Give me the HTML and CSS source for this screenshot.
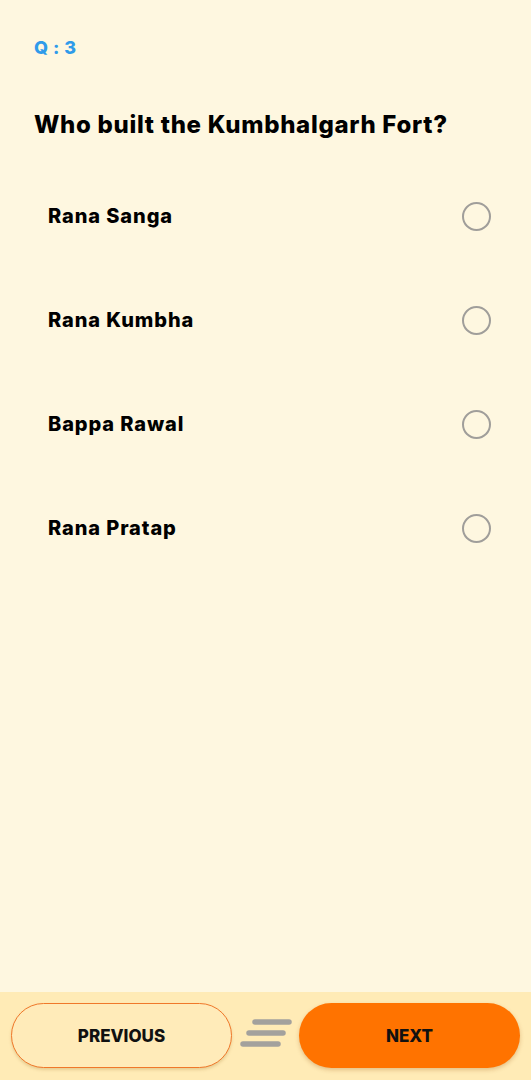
FILE: index.html
```html
<!DOCTYPE html>
<html lang="en">
<head>
    <meta charset="UTF-8">
    <meta name="viewport" content="width=device-width, initial-scale=1.0">
    <title>Quiz</title>
    <link rel="stylesheet" href="styles.css">
</head>
<body>
    <div class="screen">
        <div class="content">
            <div class="q-number">Q : 3</div>
            <h1 class="question">Who built the Kumbhalgarh Fort?</h1>

            <div class="options">
                <label class="option">
                    <span class="option-text">Rana Sanga</span>
                    <span class="radio"></span>
                </label>
                <label class="option">
                    <span class="option-text">Rana Kumbha</span>
                    <span class="radio"></span>
                </label>
                <label class="option">
                    <span class="option-text">Bappa Rawal</span>
                    <span class="radio"></span>
                </label>
                <label class="option">
                    <span class="option-text">Rana Pratap</span>
                    <span class="radio"></span>
                </label>
            </div>
        </div>

        <div class="bottom-bar">
            <button class="nav-btn prev-btn">PREVIOUS</button>
            <div class="menu-icon">
                <svg width="54" height="34" viewBox="0 0 54 34">
                    <line x1="16" y1="6" x2="50" y2="6" />
                    <line x1="10" y1="17" x2="44" y2="17" />
                    <line x1="4" y1="28" x2="39" y2="28" />
                </svg>
            </div>
            <button class="nav-btn next-btn">NEXT</button>
        </div>
    </div>
</body>
</html>
```

FILE: styles.css
```css
* {
    margin: 0;
    padding: 0;
    box-sizing: border-box;
}

body {
    font-family: 'Inter', 'Lato', sans-serif;
    background: #fef7e0;
    color: #000;
}

.screen {
    height: 1080px;
    display: flex;
    flex-direction: column;
}

.content {
    flex: 1;
    padding: 36px 34px 0 34px;
}

.q-number {
    color: #2f9bea;
    font-size: 18px;
    font-weight: 800;
    line-height: 24px;
    letter-spacing: 0.5px;
}

.question {
    margin-top: 49px;
    font-size: 24px;
    font-weight: 800;
    line-height: 32px;
    letter-spacing: 0.7px;
}

.options {
    margin-top: 23px;
    display: flex;
    flex-direction: column;
}

.option {
    height: 104px;
    display: flex;
    align-items: center;
    justify-content: space-between;
    padding: 0 6px 0 14px;
    cursor: pointer;
}

.option-text {
    font-size: 20px;
    font-weight: 800;
    letter-spacing: 0.9px;
}

.radio {
    width: 29px;
    height: 29px;
    border: 2.5px solid #a09e9a;
    border-radius: 50%;
}

.bottom-bar {
    height: 88px;
    background: #ffebb6;
    display: flex;
    align-items: flex-start;
    padding: 11px 11px 0 11px;
    gap: 6px;
}

.nav-btn {
    width: 221px;
    height: 65px;
    border-radius: 33px;
    font-family: inherit;
    font-size: 17px;
    font-weight: 800;
    color: #111;
    cursor: pointer;
}

.prev-btn {
    background: #ffebb9;
    border: 1.5px solid #f0782a;
    box-shadow: 0 2px 3px rgba(160, 120, 40, 0.25);
}

.next-btn {
    background: #ff7300;
    border: none;
    box-shadow: 0 2px 4px rgba(160, 90, 20, 0.3);
}

.menu-icon {
    flex: 1;
    display: flex;
    justify-content: center;
    padding-top: 13px;
}

.menu-icon line {
    stroke: #a3a19d;
    stroke-width: 5.5;
    stroke-linecap: round;
}
```
